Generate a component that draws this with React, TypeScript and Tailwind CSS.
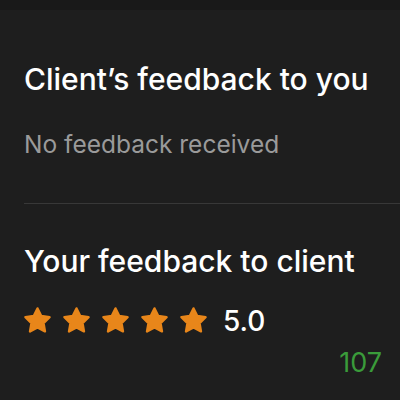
import React from "react";

function Star() {
  return (
    <svg viewBox="0 0 24 24" className="h-[29px] w-[29px] shrink-0" aria-hidden="true">
      <polygon
        points="12 2 15.09 8.26 22 9.27 17 14.14 18.18 21.02 12 17.77 5.82 21.02 7 14.14 2 9.27 8.91 8.26"
        fill="#e8861a"
        stroke="#e8861a"
        strokeWidth="2"
        strokeLinejoin="round"
      />
    </svg>
  );
}

export default function App() {
  const rating = 5;

  return (
    <div
      className="flex h-[400px] w-[400px] flex-col bg-[#1e1e1e] text-white"
      style={{ fontFamily: "Inter, 'Liberation Sans', sans-serif" }}
    >
      {/* top bar edge */}
      <div className="h-[10px] shrink-0 bg-[#191919]" />

      {/* client's feedback */}
      <section className="pl-6 pt-[51px]">
        <h2 className="text-[30px] font-medium leading-[36px]">Client’s feedback to you</h2>
        <p className="mt-[32px] text-[24.5px] leading-[30px] text-[#9a9a9a]">
          No feedback received
        </p>
      </section>

      <div className="ml-6 mt-[44px] h-px shrink-0 bg-[#383838]" />

      {/* your feedback */}
      <section className="pl-6 pt-[39px]">
        <h2 className="text-[30px] font-medium leading-[36px]">Your feedback to client</h2>
        <div className="-ml-px mt-[27px] flex items-center">
          <div className="flex gap-[10px]">
            {Array.from({ length: rating }).map((_, i) => (
              <Star key={i} />
            ))}
          </div>
          <span className="ml-[15px] text-[28px] font-medium leading-none">5.0</span>
        </div>
      </section>

      <div className="flex justify-end pr-[18px] pt-[14px]">
        <span className="text-[27px] leading-none text-[#3a9b3a]">107</span>
      </div>
    </div>
  );
}
